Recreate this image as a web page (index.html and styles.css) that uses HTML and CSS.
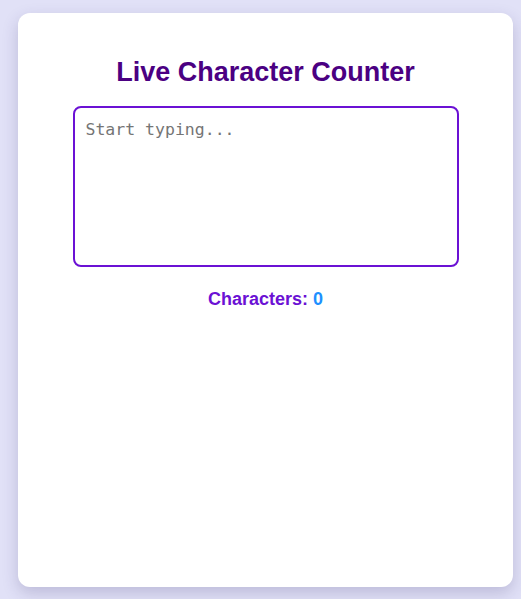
FILE: index.html
```html
<!DOCTYPE html>
<html lang="en">
<head>
<meta charset="utf-8">
<title>Live Character Counter</title>
<link rel="stylesheet" href="styles.css">
</head>
<body>
<main class="card">
  <h1 class="title">Live Character Counter</h1>
  <textarea class="input" placeholder="Start typing..."></textarea>
  <p class="counter">Characters: <span class="count">0</span></p>
</main>
</body>
</html>
```
FILE: styles.css
```css
html, body {
  margin: 0;
  padding: 0;
}
body {
  background: #e1e1f7;
  font-family: "Liberation Sans", Arial, sans-serif;
  min-height: 599px;
  box-sizing: border-box;
  padding: 13px 8px 12px 18px;
}
.card {
  background: #ffffff;
  border-radius: 12px;
  box-shadow: 0 6px 16px rgba(60, 50, 110, 0.22);
  height: 574px;
  box-sizing: border-box;
  padding: 41px 20px 20px;
  display: flex;
  flex-direction: column;
  align-items: center;
}
.title {
  margin: 0;
  font-size: 27px;
  line-height: 36px;
  font-weight: bold;
  color: #4b0082;
}
.input {
  margin-top: 16px;
  width: 386px;
  height: 161px;
  box-sizing: border-box;
  border: 2px solid #6b11d4;
  border-radius: 8px;
  padding: 12px 11px;
  font-family: "DejaVu Sans Mono", monospace;
  font-size: 16.5px;
  resize: none;
  outline: none;
}
.input::placeholder {
  color: #757575;
}
.counter {
  margin: 22px 0 0;
  font-size: 18px;
  font-weight: bold;
  color: #6b11d4;
}
.count {
  color: #1e90ff;
}
```
